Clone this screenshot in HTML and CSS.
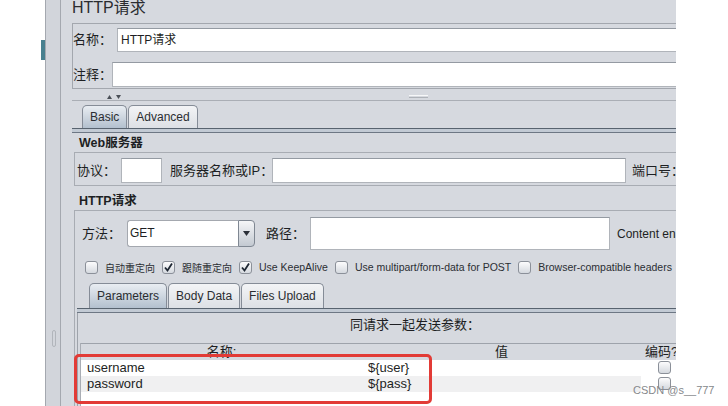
FILE: index.html
```html
<html>
<head>
    <meta charset="utf-8" />
    <title>HTTP请求</title>
    <link rel="stylesheet" href="styles.css">
</head>

<body>
    <div class="screen">
        <div class="gutter"><div class="marker"></div></div>
        <div class="side"><div class="grip"></div></div>
        <div class="main">
            <div class="title">HTTP请求</div>

            <div class="namebox">
                <div class="frow r1">
                    <span class="lbl">名称：</span>
                    <div class="field">HTTP请求</div>
                </div>
                <div class="frow r2">
                    <span class="lbl">注释：</span>
                    <div class="field"></div>
                </div>
            </div>

            <div class="divider">
                <svg class="arrows" width="15" height="5" viewBox="0 0 15 5">
                    <path d="M0 5 L2.5 1 L5 5 Z" fill="#4a4f57" />
                    <path d="M9 1 L14 1 L11.5 5 Z" fill="#4a4f57" />
                </svg>
                <span class="handle"></span>
            </div>

            <div class="tabs top">
                <div class="tab on">Basic</div>
                <div class="tab">Advanced</div>
            </div>
            <div class="tabline"></div>

            <div class="pane">
                <div class="sect">Web服务器</div>
                <div class="group web">
                    <span class="lbl w1">协议：</span>
                    <div class="input proto"></div>
                    <span class="lbl w2">服务器名称或IP：</span>
                    <div class="input host"></div>
                    <span class="lbl w3">端口号：</span>
                </div>

                <div class="sect sect2">HTTP请求</div>
                <div class="group http">
                    <div class="method">
                        <span class="lbl m1">方法：</span>
                        <div class="select">
                            <div class="val">GET</div>
                            <div class="btn">
                                <svg width="7" height="5" viewBox="0 0 7 5"><path d="M0 0 L7 0 L3.5 5 Z" fill="#2b3038" /></svg>
                            </div>
                        </div>
                        <span class="lbl m2">路径：</span>
                        <div class="input path"></div>
                        <span class="extra">Content en</span>
                    </div>

                    <div class="checks">
                        <span class="cb"></span><span class="txt zh">自动重定向</span>
                        <span class="cb"><svg width="11" height="11" viewBox="0 0 11 11"><path d="M2 5.5 L4.5 8.5 L9 1.5" fill="none" stroke="#1e2733" stroke-width="1.8" /></svg></span><span class="txt zh">跟随重定向</span>
                        <span class="cb"><svg width="11" height="11" viewBox="0 0 11 11"><path d="M2 5.5 L4.5 8.5 L9 1.5" fill="none" stroke="#1e2733" stroke-width="1.8" /></svg></span><span class="txt">Use KeepAlive</span>
                        <span class="cb"></span><span class="txt">Use multipart/form-data for POST</span>
                        <span class="cb"></span><span class="txt">Browser-compatible headers</span>
                    </div>

                    <div class="tabs sub">
                        <div class="tab on">Parameters</div>
                        <div class="tab">Body Data</div>
                        <div class="tab">Files Upload</div>
                    </div>
                    <div class="tabline subline"></div>

                    <div class="params">
                        <div class="ptitle">同请求一起发送参数：</div>
                        <div class="table">
                            <div class="trow thead">
                                <div class="c1">名称:</div>
                                <div class="c2">值</div>
                                <div class="c3">编码?</div>
                            </div>
                            <div class="trow">
                                <div class="c1">username</div>
                                <div class="c2">${user}</div>
                                <div class="c3"><span class="cb"></span></div>
                            </div>
                            <div class="trow alt">
                                <div class="c1">password</div>
                                <div class="c2">${pass}</div>
                                <div class="c3"><span class="cb"></span></div>
                            </div>
                        </div>
                    </div>
                </div>
            </div>
        </div>
    </div>

    <!-- annotation drawn over the screenshot -->
    <div class="redbox"></div>
    <div class="mark">CSDN @s__777</div>
</body>

</html>
```

FILE: styles.css
```css
body{
    margin: 0;
    background: #fff;
    font-family: "Liberation Sans", "Noto Sans CJK SC", sans-serif;
    color: #1d1f23;
}
.screen {
    display: flex;
    width: 676px;
    height: 406px;
    overflow: hidden;
}
.gutter {
    width: 45px;
    flex: none;
}
.marker {
    width: 4px;
    height: 20px;
    margin: 40px 0 0 41px;
    background: #48808f;
}
.side {
    width: 14px;
    flex: none;
    background: #d2d5db;
    border-left: 1px solid #a4a8af;
    border-right: 1px solid #a4a8af;
}
.grip {
    width: 2px;
    height: 15px;
    margin: 330px 0 0 6px;
    border: 1px solid #b1b5bb;
    border-radius: 2px;
}
.main {
    flex: 1;
    min-width: 0;
    background: #d6d9df;
    padding-left: 11px;
    overflow: hidden;
}
.title {
    font-size: 16px;
    line-height: 18px;
    height: 18px;
    margin-top: -1px;
    white-space: nowrap;
    color: #2a2c30;
}

/* name / comment box */
.namebox {
    width: 700px;
    margin-top: 6px;
    padding: 4px 0 1px;
    border: 1px solid #a3a7ae;
    border-right: none;
}
.frow {
    display: flex;
    align-items: center;
}
.r1 { height: 24px; }
.r2 { height: 25px; margin-top: 10px; }
.lbl {
    flex: none;
    font-size: 13px;
    line-height: 16px;
    white-space: nowrap;
}
.r1 .lbl { width: 44px; }
.r2 .lbl { width: 39px; }
.field {
    flex: 1;
    height: 100%;
    box-sizing: border-box;
    background: #fff;
    border: 1px solid #b0b4ba;
    border-top-color: #949aa2;
    border-right: none;
    font-size: 12px;
    line-height: 22px;
    padding-left: 3px;
}
.divider {
    display: flex;
    align-items: flex-start;
    width: 700px;
    height: 6px;
    padding-top: 5px;
    border-bottom: 1px solid #aaaeb5;
}
.arrows {
    margin-left: 35px;
    display: block;
}
.handle {
    width: 19px;
    height: 1px;
    margin: 1px 0 0 287px;
    border-top: 1px solid #f6f7f8;
    border-bottom: 1px solid #aeb2b8;
}

/* tabs */
.tabs {
    display: flex;
    align-items: flex-end;
}
.tabs.top {
    height: 23px;
    padding-left: 10px;
    margin-top: 4px;
}
.tabs.sub {
    height: 25px;
    padding-left: 14px;
    margin-top: 8px;
}
.tab {
    height: 100%;
    box-sizing: border-box;
    display: flex;
    align-items: center;
    padding: 0 7px;
    margin-right: 1px;
    border: 1px solid #858c97;
    border-bottom: none;
    border-radius: 5px 5px 0 0;
    font-size: 12px;
    color: #2a2d31;
    background: linear-gradient(#f3f4f6, #dde0e5);
}
.tab.on {
    background: linear-gradient(#e9edf2, #b3c0ce);
}
.tabline {
    width: 700px;
    height: 3px;
    background: #c2cad4;
    border-top: 1px solid #58636f;
    border-bottom: 1px solid #6d7784;
}
.subline {
    margin-left: 2px;
}

/* basic pane */
.pane {
    padding-left: 2px;
}
.sect {
    margin-left: 5px;
    padding-top: 1px;
    font-size: 12.5px;
    font-weight: bold;
    line-height: 18px;
}
.sect2 {
    padding-top: 6px;
}
.group {
    width: 700px;
    border: 1px solid #a8acb3;
    border-right: none;
}
.web {
    display: flex;
    align-items: center;
    height: 25px;
    padding: 5px 0 2px 2px;
}
.input {
    flex: none;
    height: 100%;
    box-sizing: border-box;
    background: #fff;
    border: 1px solid #b0b4ba;
    border-top-color: #949aa2;
}
.w1 { width: 44px; }
.proto { width: 41px; }
.w2 { width: 102px; margin-left: 8px; }
.host { width: 354px; }
.w3 { margin-left: 6px; }

.method {
    display: flex;
    align-items: center;
    height: 33px;
    margin-top: 6px;
    padding-left: 7px;
}
.m1 { width: 45px; }
.m2 { width: 44px; margin-left: 11px; }
.select {
    display: flex;
    flex: none;
    width: 128px;
    height: 27px;
}
.select .val {
    flex: 1;
    background: #fff;
    border: 1px solid #a4a8af;
    border-right: none;
    border-radius: 3px 0 0 3px;
    font-size: 12px;
    line-height: 25px;
    padding-left: 2px;
}
.select .btn {
    width: 15px;
    border: 1px solid #7f8792;
    border-radius: 0 4px 4px 0;
    background: linear-gradient(#f5f6f8, #c3c9d1);
    display: flex;
    align-items: center;
    justify-content: center;
}
.path { width: 300px; }
.extra {
    margin-left: 7px;
    font-size: 12px;
    white-space: nowrap;
}

.checks {
    display: flex;
    align-items: center;
    height: 16px;
    margin-top: 9px;
    padding-left: 10px;
}
.cb {
    flex: none;
    width: 13px;
    height: 13px;
    box-sizing: border-box;
    border: 1px solid #8b9099;
    border-radius: 3px;
    background: linear-gradient(#fcfcfd, #d5d9df);
    display: flex;
    align-items: center;
    justify-content: center;
}
.cb svg {
    display: block;
}
.checks .txt {
    margin: 0 7px 0 7px;
    font-size: 10.5px;
    white-space: nowrap;
    color: #2b2e33;
}
.checks .zh {
    font-size: 10px;
}

/* parameters */
.params {
    width: 674px;
    height: 120px;
    margin-left: 2px;
    border-left: 1px solid #9ea3ab;
}
.ptitle {
    padding-top: 4px;
    text-align: center;
    font-size: 13px;
    line-height: 16px;
}
.table {
    margin: 10px 0 0 2px;
    height: 70px;
    background: #fff;
    border-left: 1px solid #a9adb4;
}
.trow {
    display: grid;
    grid-template-columns: 281px 279px 80px;
    height: 16px;
    font-size: 13px;
    line-height: 16px;
}
.trow > div {
    padding-left: 6px;
    white-space: nowrap;
}
.thead {
    background: #d6d9df;
    border-top: 1px solid #9ea3ab;
}
.thead .c1,
.thead .c2 {
    text-align: center;
    padding-left: 0;
}
.thead .c3 {
    padding-left: 4px;
}
.alt .c1,
.alt .c2 {
    background: #f0f0f1;
}
.trow .c3 .cb {
    margin: 1px 0 0 11px;
}

.redbox {
    position: absolute;
    left: 74px;
    top: 354px;
    width: 358px;
    height: 50px;
    box-sizing: border-box;
    border: 3px solid #e23b36;
    border-radius: 5px;
}
.mark {
    position: absolute;
    left: 633px;
    top: 383px;
    font-size: 11px;
    line-height: 14px;
    color: #86888c;
    white-space: nowrap;
}
```
